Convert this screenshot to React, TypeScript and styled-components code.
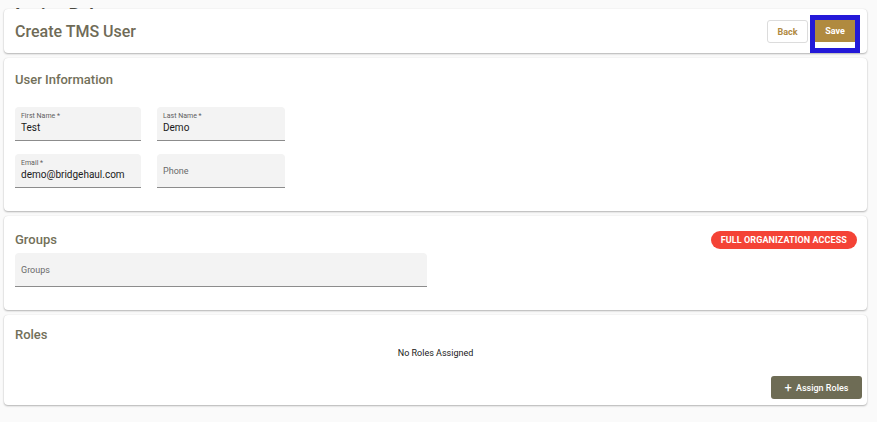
import React from 'react'
import styled, { createGlobalStyle } from 'styled-components'

const GlobalStyle = createGlobalStyle`
  html, body {
    margin: 0;
    padding: 0;
    background: #fafafa;
    font-family: Roboto, "Liberation Sans", Arial, sans-serif;
  }
`

const Page = styled.div`
  padding: 0 10px 0 4px;
  display: flex;
  flex-direction: column;
  gap: 5px;
  overflow: hidden;
  height: 422px;
  box-sizing: border-box;
`

const PageTitle = styled.h1`
  margin: 0 0 -19px 8px;
  padding-top: 6px;
  font-size: 17px;
  line-height: 17px;
  font-weight: 700;
  color: #4a4a40;
`

const Card = styled.section`
  position: relative;
  background: #fff;
  border-radius: 4px;
  box-shadow: 0 1px 2px rgba(0, 0, 0, 0.28), 0 0 1px rgba(0, 0, 0, 0.12);
  box-sizing: border-box;
`

const HeaderCard = styled(Card)`
  height: 44px;
  display: flex;
  align-items: center;
  justify-content: space-between;
  padding: 0 7px 0 11px;
`

const Title = styled.h2`
  margin: 0;
  font-size: 16px;
  font-weight: 500;
  color: #6f6b57;
`

const Actions = styled.div`
  display: flex;
  align-items: center;
  gap: 2px;
  margin-top: 6px;
`

const BackButton = styled.button`
  width: 41px;
  height: 23px;
  margin-top: -5px;
  background: #fff;
  border: 1px solid #dcdcdc;
  border-radius: 3px;
  font-family: inherit;
  font-size: 9px;
  font-weight: 700;
  color: #b08a3f;
  padding: 0;
`

const SaveFocus = styled.div`
  border: 5px solid #2419d8;
  background: #fff;
  display: flex;
  flex-direction: column;
  width: 40px;
  height: 28px;
`

const SaveButton = styled.button`
  height: 22px;
  width: 40px;
  background: #b08a3f;
  border: none;
  color: #fff;
  font-family: inherit;
  font-size: 9px;
  font-weight: 700;
  padding: 0;
`

const SectionBody = styled(Card)<{ $pt: number; $pb: number }>`
  padding: ${p => p.$pt}px 11px ${p => p.$pb}px 11px;
  display: flex;
  flex-direction: column;
`

const SectionTitle = styled.h3`
  margin: 0;
  font-size: 13px;
  line-height: 16px;
  font-weight: 500;
  color: #737059;
`

const SectionHead = styled.div`
  display: flex;
  align-items: center;
  justify-content: space-between;
  height: 18px;
  margin-right: -1px;
`

const Badge = styled.span`
  background: #f44336;
  color: #fff;
  font-size: 9px;
  font-weight: 700;
  height: 18px;
  line-height: 18px;
  padding: 0 10px;
  border-radius: 9px;
  letter-spacing: 0.1px;
`

const FieldGrid = styled.div`
  display: grid;
  grid-template-columns: 126px 128px;
  column-gap: 16px;
  row-gap: 13px;
  margin-top: 19px;
`

const Field = styled.div<{ $width?: number }>`
  width: ${p => (p.$width ? `${p.$width}px` : 'auto')};
  height: 34px;
  background: #f3f3f3;
  border-radius: 4px 4px 0 0;
  border-bottom: 1px solid #8c8c8c;
  box-sizing: border-box;
  padding: 5px 6px 0 6px;
  display: flex;
  flex-direction: column;
  justify-content: flex-start;
`

const FieldLabel = styled.span`
  font-size: 7px;
  line-height: 9px;
  color: #5e5e5e;
`

const FieldValue = styled.span`
  font-size: 10px;
  line-height: 13px;
  color: #1a1a1a;
`

const Placeholder = styled.span`
  font-size: 9px;
  line-height: 24px;
  color: #6a6a6a;
`

const EmptyText = styled.p`
  margin: 4px 0 0;
  text-align: center;
  font-size: 9px;
  line-height: 12px;
  color: #1a1a1a;
`

const Footer = styled.div`
  display: flex;
  justify-content: flex-end;
  margin: 17px -6px 0 0;
`

const AssignButton = styled.button`
  height: 23px;
  width: 91px;
  background: #6e6c55;
  color: #fff;
  border: none;
  border-radius: 3px;
  font-family: inherit;
  font-size: 9px;
  font-weight: 500;
  display: flex;
  align-items: center;
  justify-content: center;
  gap: 4px;
  padding: 0;
`

const Plus = styled.span`
  font-size: 13px;
  line-height: 13px;
  font-weight: 400;
`

export default function App() {
  return (
    <>
      <GlobalStyle />
      <Page>
        <PageTitle>Assign Roles</PageTitle>
        <HeaderCard>
          <Title>Create TMS User</Title>
          <Actions>
            <BackButton>Back</BackButton>
            <SaveFocus>
              <SaveButton>Save</SaveButton>
            </SaveFocus>
          </Actions>
        </HeaderCard>

        <SectionBody $pt={14} $pb={23}>
          <SectionTitle>User Information</SectionTitle>
          <FieldGrid>
            <Field>
              <FieldLabel>First Name *</FieldLabel>
              <FieldValue>Test</FieldValue>
            </Field>
            <Field>
              <FieldLabel>Last Name *</FieldLabel>
              <FieldValue>Demo</FieldValue>
            </Field>
            <Field>
              <FieldLabel>Email *</FieldLabel>
              <FieldValue>demo@bridgehaul.com</FieldValue>
            </Field>
            <Field>
              <Placeholder>Phone</Placeholder>
            </Field>
          </FieldGrid>
        </SectionBody>

        <SectionBody $pt={15} $pb={23}>
          <SectionHead>
            <SectionTitle>Groups</SectionTitle>
            <Badge>FULL ORGANIZATION ACCESS</Badge>
          </SectionHead>
          <Field $width={412} style={{ marginTop: 4 }}>
            <Placeholder>Groups</Placeholder>
          </Field>
        </SectionBody>

        <SectionBody $pt={12} $pb={6}>
          <SectionTitle>Roles</SectionTitle>
          <EmptyText>No Roles Assigned</EmptyText>
          <Footer>
            <AssignButton>
              <Plus>+</Plus> Assign Roles
            </AssignButton>
          </Footer>
        </SectionBody>
      </Page>
    </>
  )
}
